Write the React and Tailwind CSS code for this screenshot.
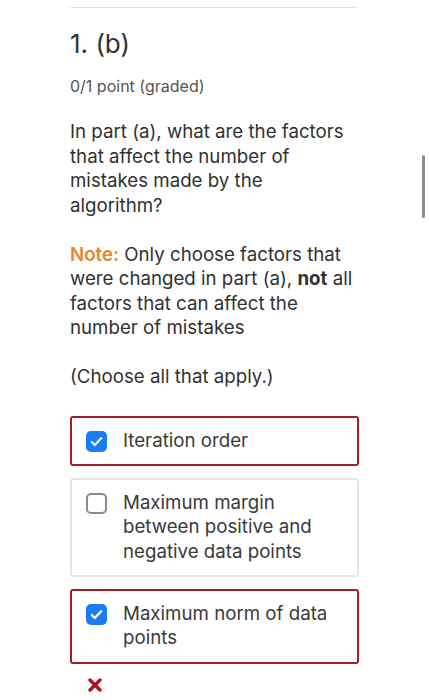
import React from 'react';

function CheckBox({ checked }) {
  if (checked) {
    return (
      <div className="w-[21px] h-[21px] rounded-[5px] bg-[#1a7cf5] flex items-center justify-center shrink-0 mt-[2px]">
        <svg width="15" height="15" viewBox="0 0 16 16" fill="none">
          <path d="M3 8.5l3.2 3.2L13 4.5" stroke="white" strokeWidth="2.4" strokeLinecap="round" strokeLinejoin="round" />
        </svg>
      </div>
    );
  }
  return <div className="w-[21px] h-[21px] rounded-[5px] border-2 border-[#8a8a8a] bg-white shrink-0 mt-[2px]" />;
}

function Option({ label, checked }) {
  return (
    <div
      className={
        checked
          ? 'flex gap-4 pl-[14px] pr-3 py-[11px] border-2 border-[#a51e26] rounded-[3px]'
          : 'flex gap-4 pl-[14px] pr-3 py-[10.5px] border-2 border-[#e6e6e6] rounded-[3px]'
      }
    >
      <CheckBox checked={checked} />
      <div className="text-[18.7px] leading-[24.5px] text-[#3a3a3a]">{label}</div>
    </div>
  );
}

export default function App() {
  return (
    <div className="relative w-[429px] h-[700px] bg-white overflow-hidden" style={{ fontFamily: 'Inter, "Noto Sans", sans-serif' }}>
      <div className="px-[70px] pt-[7px] text-[#313131]">
        <div className="border-t border-[#e4e4e4] w-[287px]" />
        <h2 className="mt-[20px] text-[26px] leading-[32px] text-[#333]">1. (b)</h2>
        <div className="mt-[16px] text-[16px] leading-[20px] text-[#555]">0/1 point (graded)</div>
        <p className="mt-[24px] text-[18.7px] leading-[24.5px]">
          In part (a), what are the factors that affect the number of mistakes made by the algorithm?
        </p>
        <p className="mt-[24.5px] text-[18.7px] leading-[24.5px]">
          <span className="text-[#e8862a] font-semibold">Note:</span> Only choose factors that were changed in part (a), <b>not</b> all factors that can affect the number of mistakes
        </p>
        <p className="mt-[24.5px] text-[18.7px] leading-[24.5px]">(Choose all that apply.)</p>
        <div className="mt-[26px] flex flex-col gap-[12px]">
          <Option label="Iteration order" checked />
          <Option label="Maximum margin between positive and negative data points" />
          <Option label="Maximum norm of data points" checked />
        </div>
        <div className="mt-[14px] pl-[18px] text-[#b0131b]">
          <svg width="14" height="14" viewBox="0 0 14 14">
            <path d="M2 2l10 10M12 2L2 12" stroke="currentColor" strokeWidth="3.4" strokeLinecap="round" />
          </svg>
        </div>
      </div>
      <div className="absolute left-[422px] top-[155px] w-[3px] h-[63px] rounded-full bg-[#8f8f8f]" />
    </div>
  );
}
